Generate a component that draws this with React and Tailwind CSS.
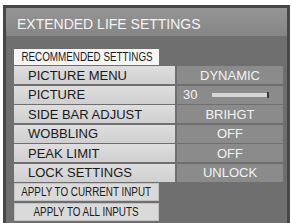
import React from "react";

const font = { fontFamily: '"Liberation Sans", Arial, sans-serif' };

function Row({ label, children }) {
  return (
    <div className="flex gap-[2px] h-[18px]">
      <div className="w-[161px] h-full bg-gradient-to-b from-[#dedede] to-[#cfcfcf] pl-[14px] flex items-center text-[13px] leading-none text-[#1a1a1a]">
        {label}
      </div>
      <div className="flex-1 h-full bg-[#8b8b8b] flex items-center justify-center text-[13px] leading-none text-[#f2f2f2]">
        {children}
      </div>
    </div>
  );
}

function Narrow({ children }) {
  return (
    <span className="inline-block whitespace-nowrap scale-x-[0.82] origin-center text-[12px] leading-none text-[#1a1a1a]">
      {children}
    </span>
  );
}

export default function App() {
  return (
    <div className="w-[292px] h-[223px] bg-white overflow-hidden pt-[5px] pl-[3px]" style={font}>
      <div className="w-[287px] h-[230px] border-[3px] border-[#474747] bg-[#6f6f6f] flex flex-col">
        <div className="h-[28px] bg-gradient-to-b from-[#959595] to-[#858585] pl-[11px] pt-[3px] flex items-center text-[14px] leading-none text-[#f4f4f4]">
          EXTENDED LIFE SETTINGS
        </div>
        <div className="flex flex-col pl-[8px] pr-[4px] pt-[13px]">
          <div className="w-[145px] h-[16px] bg-[#f6f6f6] flex items-center justify-center mb-[1px]">
            <Narrow>RECOMMENDED SETTINGS</Narrow>
          </div>
          <div className="flex flex-col gap-[1.5px]">
            <Row label="PICTURE MENU">DYNAMIC</Row>
            <Row label="PICTURE">
              <div className="flex items-center w-full pl-[6px] pr-[14px]">
                <span>30</span>
                <div className="ml-[15px] flex-1 h-[4px] bg-[#d6d6d6] relative">
                  <div className="absolute right-0 top-[-1px] w-[2px] h-[6px] bg-[#3a3a3a]" />
                </div>
              </div>
            </Row>
            <Row label="SIDE BAR ADJUST">BRIHGT</Row>
            <Row label="WOBBLING">OFF</Row>
            <Row label="PEAK LIMIT">OFF</Row>
            <Row label="LOCK SETTINGS">UNLOCK</Row>
            <div className="w-[145px] h-[18px] bg-[#dadada] border border-[#c2c2c2] flex items-center justify-center">
              <Narrow>APPLY TO CURRENT INPUT</Narrow>
            </div>
            <div className="w-[145px] h-[18px] bg-[#dadada] border border-[#c2c2c2] flex items-center justify-center">
              <Narrow>APPLY TO ALL INPUTS</Narrow>
            </div>
          </div>
        </div>
      </div>
    </div>
  );
}
